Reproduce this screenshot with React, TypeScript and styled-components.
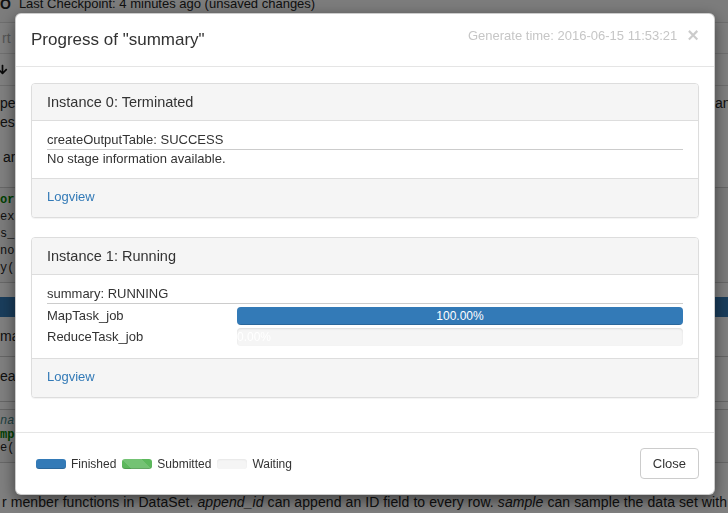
import React from "react";
import styled, { createGlobalStyle } from "styled-components";
import { FaArrowDown } from "react-icons/fa";

const GlobalStyle = createGlobalStyle`
  html, body { margin: 0; padding: 0; }
  body {
    font-family: "Liberation Sans", Arial, sans-serif;
    font-size: 13px;
    color: #333;
    background: #fff;
    overflow: hidden;
  }
  * { box-sizing: border-box; }
`;

/* ---------- background notebook ---------- */

const Page = styled.div`
  width: 728px;
  height: 513px;
  overflow: hidden;
  background: #fff;
  color: #222;
`;

const TopBar = styled.div`
  height: 23px;
  display: flex;
  align-items: flex-start;
  line-height: 8px;
  font-size: 13px;
  white-space: nowrap;
  border-bottom: 1px solid #ddd;
  background: #f8f8f8;
`;

const NotebookName = styled.span`
  font-weight: bold;
  font-size: 14px;
  margin-right: 8px;
`;

const MenuBar = styled.div`
  height: 31px;
  display: flex;
  align-items: center;
  padding-left: 2px;
  border-bottom: 1px solid #e0e0e0;
  color: #aaa;
  font-size: 14px;
`;

const ToolBar = styled.div`
  height: 32px;
  display: flex;
  align-items: center;
  border-bottom: 1px solid #ddd;
`;

const ToolButton = styled.span`
  display: flex;
  align-items: center;
  margin-left: -3px;
  color: #111;
`;

const TextCell = styled.div`
  padding: 8px 0 20px;
  font-size: 14px;
  line-height: 19px;
  white-space: nowrap;
`;

const WideLine = styled.div`
  display: grid;
  grid-template-columns: 715px auto;
  overflow: hidden;
`;

const Para = styled.div<{ $gap?: number }>`
  margin-top: ${(p) => p.$gap ?? 0}px;
  padding-left: ${(p) => (p.$gap ? 3 : 0)}px;
`;

const CodeCell = styled.div<{ $lh: number; $pt: number; $pb: number; $noTop?: boolean }>`
  border-top: ${(p) => (p.$noTop ? "none" : "1px solid #cfcfcf")};
  border-bottom: 1px solid #cfcfcf;
  background: #f7f7f7;
  padding: ${(p) => p.$pt}px 0 ${(p) => p.$pb}px;
  font-family: "Liberation Mono", "Courier New", monospace;
  font-size: 12px;
  line-height: ${(p) => p.$lh}px;
  white-space: nowrap;
`;

const Kw = styled.span`
  color: #008000;
  font-weight: bold;
`;

const Comment = styled.span`
  color: #408080;
  font-style: italic;
`;

const SelectedBar = styled.div`
  margin-top: 14px;
  height: 20px;
  background: #337ab7;
`;

const OutRow = styled.div<{ $h: number; $pt: number }>`
  height: ${(p) => p.$h}px;
  padding-top: ${(p) => p.$pt}px;
  font-size: 14px;
  line-height: 20px;
  border-bottom: 1px solid #ccc;
  white-space: nowrap;
`;

const BottomText = styled.div`
  padding-top: 29px;
  padding-left: 2px;
  font-size: 14px;
  line-height: 20px;
  letter-spacing: 0.08px;
  white-space: nowrap;
`;

/* ---------- modal ---------- */

const Backdrop = styled.div`
  position: fixed;
  inset: 0;
  background: rgba(0, 0, 0, 0.5);
`;

const Modal = styled.div`
  position: fixed;
  top: 13px;
  left: 15px;
  width: 700px;
  background: #fff;
  border: 1px solid rgba(0, 0, 0, 0.2);
  border-radius: 6px;
  box-shadow: 0 5px 15px rgba(0, 0, 0, 0.5);
  color: #333;
  font-family: "Liberation Sans", Arial, sans-serif;
  font-size: 13px;
`;

const Header = styled.div`
  display: flex;
  align-items: flex-start;
  height: 53px;
  padding: 15px;
  border-bottom: 1px solid #e5e5e5;
`;

const Title = styled.h4`
  flex: 1;
  margin: 0;
  font-size: 17px;
  line-height: 22px;
  font-weight: normal;
  color: #333;
`;

const GenTime = styled.span`
  font-size: 13px;
  line-height: 14px;
  color: #c6c6c6;
`;

const CloseX = styled.button`
  margin-left: 10px;
  padding: 0;
  border: 0;
  background: none;
  font-family: "Liberation Sans", Arial, sans-serif;
  font-size: 20px;
  font-weight: bold;
  line-height: 12px;
  color: #000;
  opacity: 0.2;
`;

const Body = styled.div`
  display: flex;
  flex-direction: column;
  gap: 19px;
  padding: 16px 15px 34px;
`;

const Panel = styled.div`
  border: 1px solid #ddd;
  border-radius: 4px;
  background: #fff;
  box-shadow: 0 1px 1px rgba(0, 0, 0, 0.05);
`;

const PanelHeading = styled.div`
  padding: 10px 15px;
  background: #f5f5f5;
  border-bottom: 1px solid #ddd;
  border-radius: 3px 3px 0 0;
  font-size: 14.5px;
  line-height: 16px;
  color: #333;
`;

const PanelBody = styled.div`
  padding: 10px 15px;
  font-size: 13px;
`;

const StageTitle = styled.div`
  line-height: 18px;
  border-bottom: 1px solid #ccc;
`;

const Note = styled.div`
  line-height: 18px;
`;

const TaskList = styled.div`
  display: grid;
  grid-template-columns: 190px 1fr;
  row-gap: 3px;
  padding: 3px 0 2px;
`;

const TaskName = styled.div`
  line-height: 18px;
`;

const Progress = styled.div`
  height: 18px;
  background: #f5f5f5;
  border-radius: 4px;
  box-shadow: inset 0 1px 2px rgba(0, 0, 0, 0.1);
  overflow: hidden;
`;

const ProgressBar = styled.div`
  height: 100%;
  background: #337ab7;
  color: #fff;
  font-size: 12px;
  line-height: 18px;
  text-align: center;
  white-space: nowrap;
  box-shadow: inset 0 -1px 0 rgba(0, 0, 0, 0.15);
`;

const PanelFooter = styled.div`
  padding: 9px 15px 11px;
  background: #f5f5f5;
  border-top: 1px solid #ddd;
  border-radius: 0 0 3px 3px;
  line-height: 18px;
`;

const LogLink = styled.a`
  color: #337ab7;
  text-decoration: none;
  font-size: 13px;
`;

const Footer = styled.div`
  display: flex;
  align-items: center;
  justify-content: space-between;
  padding: 15px;
  border-top: 1px solid #e5e5e5;
`;

const Legend = styled.div`
  display: flex;
  align-items: center;
  padding-left: 5px;
  font-size: 12px;
  color: #333;
`;

const Swatch = styled.span<{ $kind: "done" | "submitted" | "waiting" }>`
  display: inline-block;
  width: 30px;
  height: 10px;
  border-radius: 3px;
  margin-right: 5px;
  background-color: ${(p) =>
    p.$kind === "done" ? "#337ab7" : p.$kind === "submitted" ? "#5cb85c" : "#f5f5f5"};
  background-image: ${(p) =>
    p.$kind === "submitted"
      ? "linear-gradient(45deg, rgba(255,255,255,.15) 25%, transparent 25%, transparent 50%, rgba(255,255,255,.15) 50%, rgba(255,255,255,.15) 75%, transparent 75%, transparent)"
      : "none"};
  background-size: 40px 40px;
  box-shadow: ${(p) =>
    p.$kind === "waiting" ? "inset 0 1px 2px rgba(0,0,0,.06)" : "inset 0 -1px 0 rgba(0,0,0,.15)"};
`;

const LegendLabel = styled.span`
  margin-right: 6px;
`;

const CloseButton = styled.button`
  height: 31px;
  padding: 0 12px;
  border: 1px solid #ccc;
  border-radius: 4px;
  background: #fff;
  color: #333;
  font-family: "Liberation Sans", Arial, sans-serif;
  font-size: 13px;
`;

type Task = { name: string; pct: number };

const tasks: Task[] = [
  { name: "MapTask_job", pct: 100 },
  { name: "ReduceTask_job", pct: 0 },
];

export default function App() {
  return (
    <>
      <GlobalStyle />
      <Page>
        <TopBar>
          <NotebookName>O</NotebookName>
          <span>Last Checkpoint: 4 minutes ago (unsaved changes)</span>
        </TopBar>
        <MenuBar>rt</MenuBar>
        <ToolBar>
          <ToolButton>
            <FaArrowDown size={11} />
          </ToolButton>
        </ToolBar>
        <TextCell>
          <WideLine>
            <span>pe of DataFrame, which can be used to do various kinds of data operations.</span>
            <span>animation</span>
          </WideLine>
          <Para>es of the data set.</Para>
          <Para $gap={16}>ar is an example.</Para>
        </TextCell>
        <CodeCell $lh={17} $pt={4} $pb={5}>
          <div>
            <Kw>ort</Kw> odps.df <Kw>as</Kw> df
          </div>
          <div>examples = df.DataFrame(o.get_table('iris'))</div>
          <div>s_df = examples[examples.sepal_length &gt; 5]</div>
          <div>no = s_df.count()</div>
          <div>y(s_df.describe())</div>
        </CodeCell>
        <SelectedBar />
        <OutRow $h={40} $pt={9}>mary of the result</OutRow>
        <OutRow $h={45} $pt={9}>eat the operation</OutRow>
        <OutRow $h={8} $pt={0} />
        <CodeCell $lh={13.5} $pt={5} $pb={6} $noTop>
          <div>
            <Comment>nate the data</Comment>
          </div>
          <div>
            <Kw>mp</Kw>le = examples.sample(0.1)
          </div>
          <div>e(sample.head(10))</div>
        </CodeCell>
        <BottomText>
          r menber functions in DataSet. <i>append_id</i> can append an ID field to every row.{" "}
          <i>sample</i> can sample the data set with
        </BottomText>
      </Page>

      <Backdrop />

      <Modal>
        <Header>
          <Title>Progress of "summary"</Title>
          <GenTime>Generate time: 2016-06-15 11:53:21</GenTime>
          <CloseX aria-label="Close">×</CloseX>
        </Header>
        <Body>
          <Panel>
            <PanelHeading>Instance 0: Terminated</PanelHeading>
            <PanelBody>
              <StageTitle>createOutputTable: SUCCESS</StageTitle>
              <Note>No stage information available.</Note>
            </PanelBody>
            <PanelFooter>
              <LogLink href="#">Logview</LogLink>
            </PanelFooter>
          </Panel>
          <Panel>
            <PanelHeading>Instance 1: Running</PanelHeading>
            <PanelBody>
              <StageTitle>summary: RUNNING</StageTitle>
              <TaskList>
                {tasks.map((t) => (
                  <React.Fragment key={t.name}>
                    <TaskName>{t.name}</TaskName>
                    <Progress>
                      <ProgressBar style={{ width: `${t.pct}%` }}>{t.pct.toFixed(2)}%</ProgressBar>
                    </Progress>
                  </React.Fragment>
                ))}
              </TaskList>
            </PanelBody>
            <PanelFooter>
              <LogLink href="#">Logview</LogLink>
            </PanelFooter>
          </Panel>
        </Body>
        <Footer>
          <Legend>
            <Swatch $kind="done" />
            <LegendLabel>Finished</LegendLabel>
            <Swatch $kind="submitted" />
            <LegendLabel>Submitted</LegendLabel>
            <Swatch $kind="waiting" />
            <LegendLabel>Waiting</LegendLabel>
          </Legend>
          <CloseButton>Close</CloseButton>
        </Footer>
      </Modal>
    </>
  );
}
